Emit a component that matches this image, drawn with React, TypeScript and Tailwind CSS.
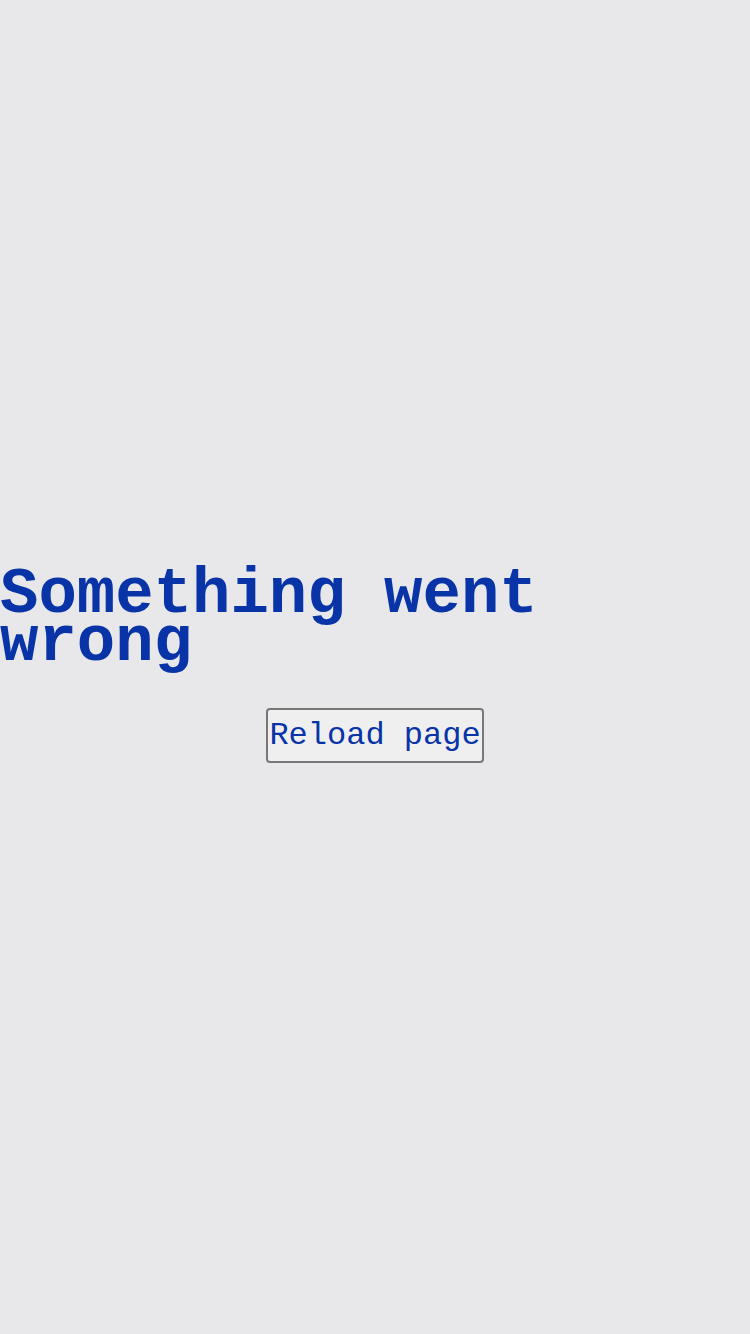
import React from 'react';

const App: React.FC = () => {
  return (
    <div className="min-h-screen w-full bg-[#e8e8ea] flex flex-col justify-center items-center font-['Liberation_Mono',monospace] text-[#0834a8]">
      {/* Error heading */}
      <h1 className="w-full text-left text-[64px] leading-[48px] font-bold">Something went wrong</h1>

      {/* Reload button */}
      <button
        type="button"
        className="mt-[41px] border-2 border-[#777777] rounded-[4px] bg-[#efeff0] px-px py-0.5 text-[32px] leading-[47px]"
        onClick={() => window.location.reload()}
      >
        Reload page
      </button>
    </div>
  );
};

export default App;
